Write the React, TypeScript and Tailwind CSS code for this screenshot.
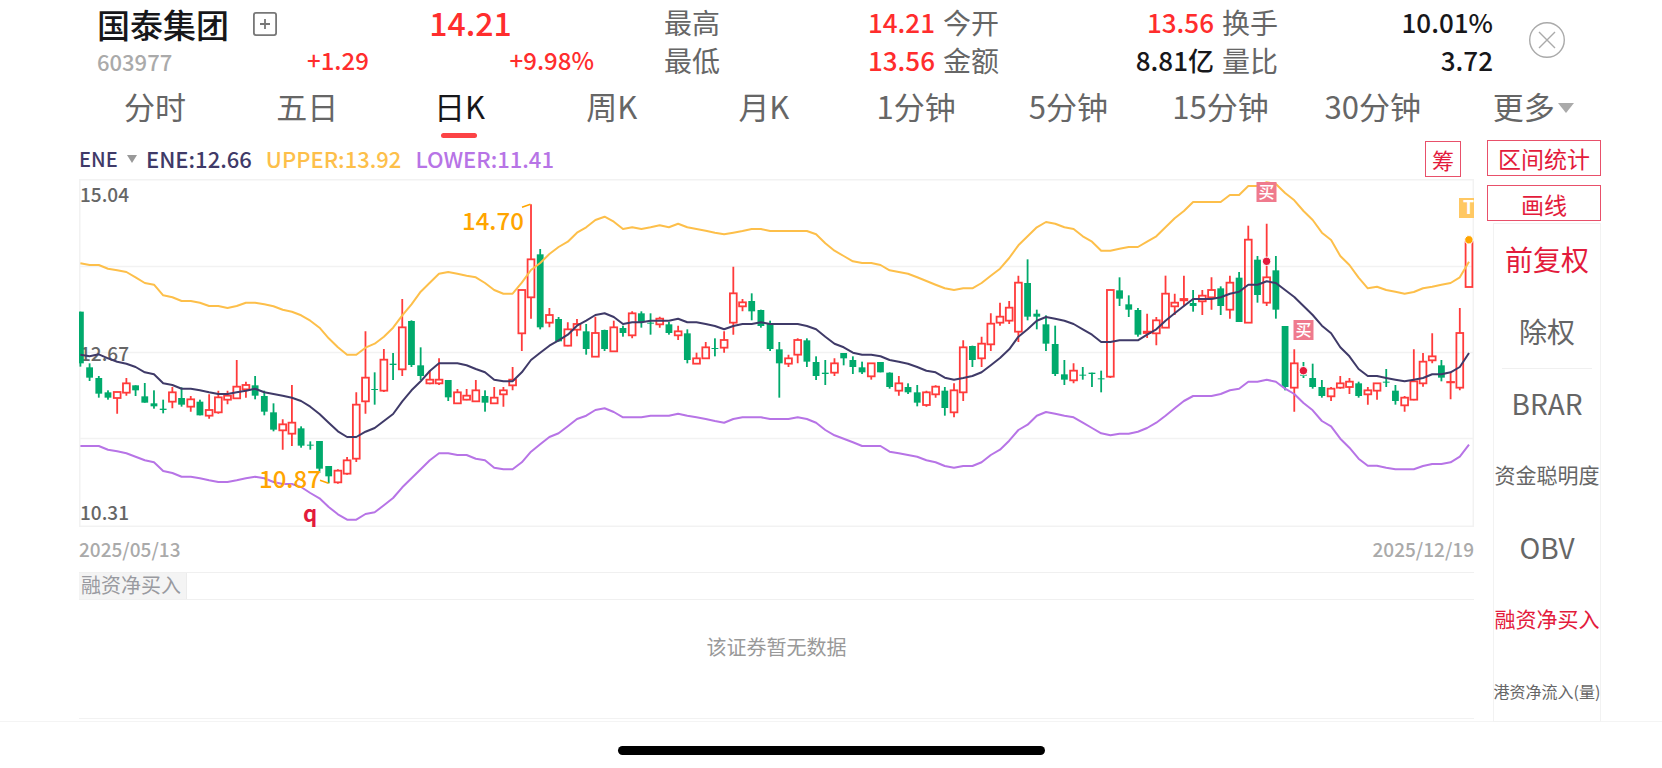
import { useState } from 'react'

type Candle = [high: number, top: number, bottom: number, low: number, up: 0 | 1]

// one entry per trading day, in ticks measured down the price axis
const candles: Candle[] = [
  [422, 422, 577, 587, 0], [577, 589, 620, 630, 0], [615, 621, 668, 680, 0], [658, 664, 680, 686, 0],
  [662, 663, 681, 728, 1], [621, 637, 665, 674, 1], [643, 643, 658, 675, 0], [636, 676, 695, 695, 0],
  [658, 697, 706, 713, 0], [686, 713, 717, 727, 0], [648, 664, 692, 712, 1], [649, 681, 701, 707, 0],
  [675, 685, 707, 722, 1], [686, 692, 733, 733, 0], [670, 717, 734, 743, 1], [659, 679, 724, 728, 1],
  [659, 674, 686, 700, 1], [567, 647, 682, 682, 1], [632, 642, 655, 680, 1], [615, 643, 674, 685, 0],
  [659, 675, 722, 733, 0], [697, 724, 776, 781, 0], [745, 760, 778, 836, 1], [642, 755, 788, 825, 1],
  [766, 772, 824, 830, 0], [811, 821, 824, 836, 0], [810, 810, 893, 906, 0], [885, 885, 916, 937, 0],
  [895, 899, 934, 938, 1], [858, 868, 908, 911, 1], [664, 701, 863, 873, 1], [481, 620, 691, 728, 1],
  [604, 654, 657, 701, 0], [534, 566, 659, 663, 1], [546, 578, 582, 627, 0], [384, 469, 595, 615, 1],
  [448, 450, 582, 588, 0], [529, 583, 615, 627, 0], [599, 626, 637, 640, 1], [562, 626, 637, 642, 1],
  [627, 627, 679, 690, 0], [654, 664, 697, 697, 1], [654, 674, 686, 688, 1], [627, 658, 691, 692, 1],
  [658, 675, 695, 722, 0], [648, 680, 697, 697, 1], [648, 658, 670, 707, 1], [588, 626, 643, 658, 1],
  [356, 357, 487, 540, 1], [100, 265, 379, 443, 1], [234, 250, 469, 475, 0], [411, 432, 455, 469, 1],
  [438, 444, 511, 512, 0], [454, 475, 524, 526, 1], [444, 459, 476, 496, 1], [459, 481, 534, 551, 0],
  [437, 486, 557, 558, 1], [476, 477, 534, 540, 0], [449, 469, 541, 541, 1], [464, 471, 486, 497, 0],
  [421, 427, 493, 502, 1], [421, 427, 453, 470, 0], [427, 455, 458, 491, 0], [437, 443, 460, 470, 1],
  [453, 460, 486, 491, 0], [464, 481, 493, 507, 1], [475, 487, 567, 577, 0], [545, 562, 578, 578, 1],
  [513, 529, 562, 562, 1], [502, 531, 534, 556, 0], [481, 507, 530, 545, 1], [287, 367, 455, 491, 1],
  [384, 394, 406, 421, 1], [367, 390, 421, 448, 0], [416, 417, 465, 470, 0], [449, 459, 534, 540, 0],
  [513, 535, 577, 680, 0], [551, 562, 578, 588, 1], [502, 507, 551, 577, 1], [502, 508, 572, 588, 0],
  [556, 573, 615, 627, 0], [567, 605, 609, 642, 0], [562, 577, 605, 615, 1], [546, 546, 562, 583, 0],
  [556, 567, 588, 609, 0], [572, 589, 604, 609, 0], [577, 577, 616, 626, 1], [573, 573, 604, 604, 0],
  [604, 605, 648, 653, 0], [615, 637, 659, 674, 1], [637, 648, 664, 669, 0], [642, 664, 695, 706, 0],
  [659, 664, 702, 707, 1], [643, 647, 670, 680, 1], [648, 659, 711, 734, 0], [637, 658, 724, 739, 1],
  [508, 529, 664, 690, 1], [524, 525, 567, 588, 0], [497, 518, 562, 588, 1], [427, 458, 520, 540, 1],
  [395, 437, 455, 464, 1], [390, 410, 449, 459, 1], [314, 335, 482, 513, 1], [265, 336, 437, 448, 0],
  [416, 428, 437, 475, 0], [433, 460, 518, 540, 0], [464, 519, 609, 615, 0], [567, 610, 626, 642, 0],
  [577, 599, 628, 637, 1], [588, 611, 614, 626, 0], [605, 605, 609, 648, 0], [599, 622, 625, 664, 0],
  [356, 357, 617, 621, 1], [319, 358, 383, 405, 0], [373, 400, 416, 438, 0], [411, 417, 491, 497, 0],
  [428, 482, 486, 501, 1], [438, 448, 487, 523, 1], [314, 368, 470, 470, 1], [368, 395, 406, 432, 1],
  [314, 384, 388, 406, 1], [357, 396, 405, 422, 0], [357, 374, 391, 432, 1], [319, 357, 379, 416, 1],
  [346, 352, 405, 432, 0], [314, 335, 416, 443, 1], [303, 320, 453, 453, 0], [164, 206, 455, 455, 1],
  [255, 266, 372, 395, 0], [158, 319, 395, 405, 1], [255, 298, 416, 443, 0], [465, 465, 648, 658, 0],
  [535, 577, 650, 722, 1], [573, 611, 614, 621, 0], [578, 621, 648, 653, 0], [627, 648, 675, 680, 0],
  [648, 653, 676, 690, 1], [615, 637, 650, 653, 1], [621, 632, 648, 669, 1], [632, 637, 675, 680, 0],
  [648, 658, 670, 701, 1], [637, 637, 659, 686, 1], [594, 632, 635, 648, 0], [642, 659, 690, 701, 0],
  [675, 680, 703, 722, 1], [535, 631, 686, 688, 1], [546, 572, 637, 647, 1], [487, 556, 568, 577, 1],
  [567, 583, 620, 631, 0], [605, 633, 634, 685, 1], [411, 486, 650, 658, 1], [206, 212, 348, 348, 1],
]

const upper = [
  277, 282, 282, 293, 298, 303, 319, 336, 341, 373, 379, 390, 390, 395, 405, 405, 411, 405, 395, 395,
  400, 406, 416, 422, 433, 449, 470, 502, 529, 551, 551, 530, 518, 497, 470, 433, 400, 362, 335, 308,
  303, 308, 314, 319, 336, 357, 368, 368, 335, 297, 276, 249, 228, 212, 185, 169, 147, 137, 152, 174,
  169, 174, 169, 163, 169, 158, 169, 174, 179, 185, 190, 185, 180, 174, 174, 180, 180, 180, 180, 180,
  190, 217, 239, 255, 271, 276, 276, 282, 298, 303, 308, 319, 330, 341, 352, 357, 352, 352, 336, 314,
  293, 261, 223, 196, 169, 153, 158, 169, 174, 196, 212, 239, 239, 233, 228, 228, 212, 196, 169, 142,
  120, 93, 93, 93, 93, 72, 72, 45, 45, 34, 39, 66, 88, 120, 147, 185, 207, 255, 282, 320,
  352, 347, 357, 362, 368, 363, 352, 347, 341, 336, 319, 272,
]

const ene = [
  551, 556, 550, 562, 572, 578, 588, 604, 610, 637, 642, 653, 653, 658, 664, 669, 669, 664, 659, 653,
  664, 669, 674, 680, 690, 707, 729, 755, 781, 798, 798, 782, 771, 750, 729, 691, 658, 631, 600, 577,
  577, 577, 583, 594, 604, 626, 631, 631, 604, 567, 545, 524, 508, 491, 464, 449, 432, 427, 438, 459,
  454, 454, 449, 449, 449, 443, 454, 454, 459, 465, 475, 465, 459, 459, 454, 459, 459, 459, 459, 465,
  475, 497, 518, 529, 545, 551, 551, 556, 567, 572, 578, 588, 599, 604, 620, 626, 621, 615, 604, 583,
  561, 535, 497, 475, 449, 438, 443, 449, 459, 475, 491, 513, 513, 508, 508, 508, 491, 475, 449, 427,
  405, 384, 384, 384, 379, 368, 362, 341, 341, 331, 336, 357, 378, 405, 432, 464, 487, 529, 556, 594,
  615, 615, 621, 626, 631, 626, 621, 610, 610, 604, 588, 546,
]

const lower = [
  825, 825, 825, 836, 841, 847, 857, 868, 874, 900, 906, 917, 917, 922, 928, 933, 933, 928, 922, 917,
  922, 933, 939, 939, 948, 966, 982, 1008, 1030, 1046, 1046, 1029, 1024, 1003, 981, 949, 922, 895, 868, 847,
  847, 852, 852, 863, 868, 890, 895, 895, 874, 842, 820, 798, 787, 766, 744, 734, 717, 712, 723, 739,
  739, 739, 734, 734, 734, 728, 734, 739, 744, 750, 755, 744, 739, 739, 739, 744, 744, 744, 739, 744,
  755, 777, 793, 803, 814, 825, 825, 825, 842, 847, 852, 857, 868, 874, 885, 890, 885, 885, 874, 852,
  836, 809, 777, 761, 734, 723, 728, 734, 739, 755, 771, 787, 793, 788, 788, 782, 771, 755, 734, 712,
  690, 675, 675, 675, 669, 658, 653, 632, 632, 626, 632, 653, 669, 696, 718, 750, 766, 803, 830, 863,
  884, 884, 890, 895, 895, 895, 885, 879, 879, 874, 857, 821,
]

const periods = ['分时', '五日', '日K', '周K', '月K', '1分钟', '5分钟', '15分钟', '30分钟']

const quotes = [
  [{ name: '最高', value: '14.21', color: 'text-[#ff2d2d]' }, { name: '最低', value: '13.56', color: 'text-[#ff2d2d]' }],
  [{ name: '今开', value: '13.56', color: 'text-[#ff2d2d]' }, { name: '金额', value: '8.81亿', color: 'text-[#17171a]' }],
  [{ name: '换手', value: '10.01%', color: 'text-[#17171a]' }, { name: '量比', value: '3.72', color: 'text-[#17171a]' }],
]

const indicators = [
  { name: '前复权', style: 'text-[28px] text-[#e31b3c]' },
  { name: '除权', style: 'text-[28px] text-[#666666]' },
  { name: 'BRAR', style: 'text-[28px] text-[#666666]' },
  { name: '资金聪明度', style: 'text-[21px] text-[#666666]' },
  { name: 'OBV', style: 'text-[28px] text-[#666666]' },
  { name: '融资净买入', style: 'text-[21px] text-[#e31b3c]' },
  { name: '港资净流入(量)', style: 'text-[16px] text-[#666666]' },
]

const x = (i: number) => 1.4 + i * 9.196
const y = (tick: number) => tick / 3 - 8
const points = (line: number[]) => line.map((v, i) => `${x(i).toFixed(1)},${y(v).toFixed(1)}`).join(' ')

function CandleShape({ index, candle }: { index: number; candle: Candle }) {
  const [high, top, bottom, low, up] = candle
  const cx = x(index)
  if (up) {
    return (
      <g stroke="#ff3b3b" strokeWidth="1.8" fill="none">
        <path d={`M${cx} ${y(high)}V${y(top)}M${cx} ${y(bottom)}V${y(low)}`} />
        <rect x={cx - 3.4} y={y(top)} width="6.8" height={y(bottom) - y(top)} />
      </g>
    )
  }
  return (
    <g fill="#00aa6c">
      <rect x={cx - 0.9} y={y(high)} width="1.8" height={y(low) - y(high)} />
      <rect x={cx - 3.4} y={y(top)} width="6.8" height={y(bottom) - y(top)} />
    </g>
  )
}

function BuyMark({ left, top }: { left: number; top: number }) {
  return (
    <g>
      <rect x={left} y={top} width="20" height="20" fill="#ef7a8d" />
      <text x={left + 10} y={top + 16} fontSize="16" fontWeight="500" textAnchor="middle" fill="#fff">买</text>
    </g>
  )
}

function Chart() {
  return (
    <svg viewBox="0 0 1395 348" className="block w-full h-auto" role="img" aria-label="日K ENE">
      <g stroke="#f2f2f2" strokeWidth="1.5" fill="none">
        <rect x="0.75" y="0.75" width="1393.5" height="346.5" />
        <path d="M0 87.5H1395M0 173.5H1395M0 259.5H1395" />
      </g>
      <g fontSize="19" fill="#666666" fontWeight="500">
        <text x="1" y="23">15.04</text>
        <text x="1" y="182">12.67</text>
        <text x="1" y="341">10.31</text>
      </g>
      {candles.map((candle, i) => (
        <CandleShape key={i} index={i} candle={candle} />
      ))}
      <g fill="none" strokeWidth="2" strokeLinejoin="round">
        <polyline points={points(upper)} stroke="#fdbf4a" />
        <polyline points={points(ene)} stroke="#3f3a68" />
        <polyline points={points(lower)} stroke="#b774e6" />
      </g>
      <g fontSize="24" fill="#ffa500" fontWeight="500">
        <text x="383" y="51">14.70</text>
        <text x="180" y="309">10.87</text>
        <path d="M443 28.300L451.500 25.300M241 301.300L249.500 304.300" stroke="#ffa500" strokeWidth="1.5" />
      </g>
      <text x="224" y="343" fontSize="22" fontWeight="700" fill="#e31b3c">q</text>
      <BuyMark left={1177.500} top={3} />
      <BuyMark left={1214.500} top={141} />
      <rect x="1380" y="19" width="15" height="20" fill="#ffc863" />
      <text x="1384" y="35" fontSize="18" fontWeight="700" fill="#fff">T</text>
      <g stroke="#fff" strokeWidth="1">
        <circle cx="1187.600" cy="82.300" r="4.200" fill="#e31b3c" />
        <circle cx="1224.400" cy="191.700" r="4.200" fill="#e31b3c" />
        <circle cx="1389.900" cy="60.800" r="4.200" fill="#ffa500" />
      </g>
    </svg>
  )
}

function Header() {
  return (
    <header className="flex h-[79px] px-[97px] pt-[3px]">
      <div className="w-[210px]">
        <div className="flex h-[42px] items-center">
          <h1 className="text-[33px] leading-10 font-medium text-[#17171a]">国泰集团</h1>
          <button aria-label="添加自选" className="ml-6">
            <svg width="24" height="24" viewBox="0 0 24 24" fill="none" stroke="#777777" strokeWidth="1.8">
              <rect x="0.9" y="0.9" width="22.2" height="22.2" rx="2" />
              <path d="M12 7V17M7 12H17" />
            </svg>
          </button>
        </div>
        <p className="text-[22px] leading-8 font-medium text-[#aaaaaa]">603977</p>
      </div>
      <div className="w-[287px] font-medium text-[#ff2d2d]">
        <p className="pl-10 text-center text-[32px] leading-[38px]">14.21</p>
        <p className="flex justify-between text-[24px] leading-[38px]">
          <span>+1.29</span>
          <span>+9.98%</span>
        </p>
      </div>
      <div className="ml-[70px] grid flex-1 grid-cols-3 gap-2">
        {quotes.map((column) => (
          <dl key={column[0].name} className="text-[26px]">
            {column.map((quote) => (
              <div key={quote.name} className="flex items-center justify-between leading-[38px]">
                <dt className="text-[28px] text-[#666666]">{quote.name}</dt>
                <dd className={`font-medium ${quote.color}`}>{quote.value}</dd>
              </div>
            ))}
          </dl>
        ))}
      </div>
      <button aria-label="关闭" className="ml-9 h-[74px]">
        <svg width="36" height="36" viewBox="0 0 36 36" fill="none" stroke="#aaaaaa" strokeWidth="1.4">
          <circle cx="18" cy="18" r="17.3" />
          <path d="M10 10L26 26M26 10L10 26" />
        </svg>
      </button>
    </header>
  )
}

export default function App() {
  const [period, setPeriod] = useState('日K')

  return (
    <div className="overflow-hidden bg-white font-['Noto_Sans_CJK_SC',sans-serif]">
      <Header />

      <nav className="grid grid-cols-10 pr-[61px] pl-[79px] text-[31px] leading-[54px] text-[#666666]">
        {periods.map((name) => (
          <button key={name} onClick={() => setPeriod(name)} className="flex flex-col items-center">
            <span className={name === period ? 'text-[#17171a]' : ''}>{name}</span>
            <span className={name === period ? 'h-[5px] w-9 rounded-full bg-[#fc4346]' : 'h-[5px]'} />
          </button>
        ))}
        <button aria-haspopup="menu" className="flex items-center pb-[5px] pl-11">
          更多
          <svg width="16" height="10" viewBox="0 0 16 10" className="mt-1 ml-[3px]">
            <path d="M0 0H16L8 10Z" fill="#aaaaaa" />
          </svg>
        </button>
      </nav>

      <main className="flex gap-[13px] pr-[61px] pl-[79px]">
        <section className="min-w-0 flex-1">
          <div className="flex h-[41px] items-center text-[22px] font-medium text-[#3f3a68]">
            <label className="flex w-[67px] items-center">
              <select aria-label="指标" className="w-12 appearance-none text-[20px] outline-none">
                <option>ENE</option>
              </select>
              <svg width="10" height="8" viewBox="0 0 10 8">
                <path d="M0 0H10L5 8Z" fill="#999999" />
              </svg>
            </label>
            <span>ENE:12.66</span>
            <span className="ml-[14px] text-[#fdbf4a]">UPPER:13.92</span>
            <span className="ml-[14px] text-[#b774e6]">LOWER:11.41</span>
            <button className="mr-[13px] ml-auto size-9 border border-[#e8506a] text-[22px] leading-8 font-normal text-[#e31b3c]">筹</button>
          </div>

          <Chart />

          <div className="flex h-[45px] items-center justify-between text-[19px] font-medium text-[#aaaaaa]">
            <time>2025/05/13</time>
            <time>2025/12/19</time>
          </div>

          <div className="flex h-7 border-y border-[#f0f0f0]">
            <h2 className="w-[108px] border-r border-[#ececec] bg-[#f4f4f4] pl-[2px] text-[20px] leading-6 text-[#999aa0]">融资净买入</h2>
          </div>
          <p className="flex h-[119px] items-center justify-center border-b border-[#f2f2f2] pb-6 text-[20px] text-[#999999]">该证券暂无数据</p>
        </section>

        <aside className="flex w-[114px] flex-col pt-[2px]">
          <button className="h-9 border border-[#e8506a] text-[23px] leading-8 text-[#e31b3c]">区间统计</button>
          <button className="mt-[9px] h-9 border border-[#e8506a] pt-px text-[23px] leading-8 text-[#e31b3c]">画线</button>
          <ul className="mt-[2px] ml-[6px] h-[499px] overflow-hidden border border-[#f2f2f2]">
            {indicators.map((item) => (
              <li key={item.name}>
                <button className={`flex h-[72px] w-full items-center justify-center pb-[2px] whitespace-nowrap ${item.style}`}>{item.name}</button>
                {item.name === '除权' && <hr className="mx-2 -mb-px border-[#f0f0f0]" />}
              </li>
            ))}
          </ul>
        </aside>
      </main>

      <footer className="-mt-px flex h-12 justify-center border-t border-[#f4f4f4] pt-6">
        <div className="h-[9px] w-[427px] rounded-full bg-black" />
      </footer>
    </div>
  )
}
